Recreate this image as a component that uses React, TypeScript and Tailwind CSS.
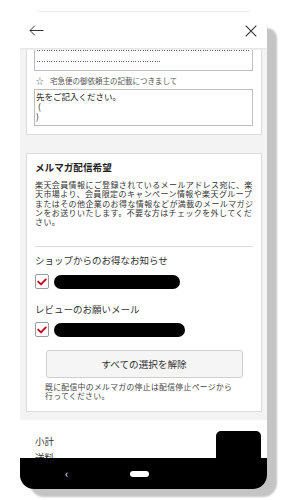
import React from "react";

const jp = "font-['Noto_Sans_CJK_JP','Noto_Sans',sans-serif]";

function Check() {
  return (
    <div className="flex h-[15px] w-[14px] items-center justify-center rounded-[2px] border border-[#9a9a9a] bg-white">
      <svg width="10" height="8" viewBox="0 0 10 8" fill="none">
        <path d="M1.2 3.6 L4 6.4 L8.8 1.4" stroke="#c40018" strokeWidth="1.9" strokeLinecap="round" strokeLinejoin="round" />
      </svg>
    </div>
  );
}

const intro = [
  "楽天会員情報にご登録されているメールアドレス宛に、楽",
  "天市場より、会員限定のキャンペーン情報や楽天グループ",
  "またはその他企業のお得な情報などが満載のメールマガジ",
  "ンをお送りいたします。不要な方はチェックを外してくだ",
  "さい。",
];

export default function App() {
  return (
    <div className={`relative h-[500px] w-[289px] overflow-hidden bg-white text-[#333] ${jp}`}>
      <div className="ml-[37px] mt-[11px] h-px w-[213px] bg-[#f8e6e9]" />

      <div className="relative ml-[20px] mt-[8px] h-[469px] w-[247px] overflow-hidden rounded-tr-[10px] rounded-b-[14px] bg-[#f3f3f3] shadow-[10px_8px_2px_#c4c4c4]">
        {/* header */}
        <div className="relative z-10 h-[28px] bg-white shadow-[0_1px_2px_rgba(0,0,0,0.07)]">
          <div className="flex h-[21px] items-center justify-between pl-[9px] pr-[10px]">
            <svg width="15" height="11" viewBox="0 0 15 11" fill="none">
              <path d="M14.5 5.5 H1 M5.8 0.7 L1 5.5 L5.8 10.3" stroke="#333" strokeWidth="1" />
            </svg>
            <svg width="12" height="12" viewBox="0 0 12 12" fill="none">
              <path d="M0.7 0.7 L11.3 11.3 M11.3 0.7 L0.7 11.3" stroke="#333" strokeWidth="1.1" />
            </svg>
          </div>
        </div>

        {/* card 1 (scrolled) */}
        <div className="ml-[6px] w-[236px] border-x border-b border-[#dcdcdc] bg-white px-[7px] pb-[8px]">
          <div className="h-[21px] w-[219px] border-x border-b border-[#bdbdbd] pl-[2px]">
            <div className="mt-[2px] h-px w-[212px] bg-[repeating-linear-gradient(90deg,#666_0_1px,transparent_1px_2.4px)]" />
            <div className="mt-[10px] h-px w-[124px] bg-[repeating-linear-gradient(90deg,#666_0_1px,transparent_1px_2.4px)]" />
          </div>
          <div className="flex h-[18px] items-center text-[7.5px] leading-[9px] text-[#555]">
            <span className="ml-[2px] w-[14px]">☆</span>
            <span>宅急便の御依頼主の記載につきまして</span>
          </div>
          <div className="h-[37px] w-[219px] whitespace-pre border border-[#bdbdbd] pl-[1px] pt-[1px] text-[8.5px] leading-[10px] text-[#222]">
            <div>先をご記入ください。</div>
            <div> (</div>
            <div>)</div>
          </div>
        </div>

        {/* card 2 */}
        <div className="ml-[6px] mt-[18px] w-[236px] border border-[#dcdcdc] bg-white px-[8px] pb-[11px] pt-[7px]">
          <div className="text-[9.6px] font-bold leading-[12px] text-[#222]">メルマガ配信希望</div>
          <div className="mt-[7px] whitespace-nowrap text-[8px] leading-[9.3px] tracking-[0.4px] text-[#333]">
            {intro.map((l) => (
              <div key={l}>{l}</div>
            ))}
          </div>
          <div className="mt-[20px] h-px w-[218px] bg-[#dcdcdc]" />

          <div className="mt-[7px] text-[9.5px] leading-[12px]">ショップからのお得なお知らせ</div>
          <div className="mt-[8px] flex items-center gap-[5px]">
            <Check />
            <div className="h-[14px] w-[126px] rounded-full bg-black" />
          </div>

          <div className="mt-[14px] text-[9.5px] leading-[12px]">レビューのお願いメール</div>
          <div className="mt-[7px] flex items-center gap-[5px]">
            <Check />
            <div className="h-[14px] w-[131px] rounded-full bg-black" />
          </div>

          <div className="mx-auto mt-[13px] flex h-[28px] w-[197px] items-center justify-center rounded-[3px] border border-[#cfcfcf] bg-[#f5f5f5] text-[9.6px]">
            すべての選択を解除
          </div>
          <div className="ml-[10px] mt-[3.5px] whitespace-nowrap text-[7.8px] leading-[9.2px] tracking-[0.35px] text-[#444]">
            <div>既に配信中のメルマガの停止は配信停止ページから</div>
            <div>行ってください。</div>
          </div>
        </div>

        {/* totals */}
        <div className="mt-[8px] h-[80px] bg-white pl-[15px] pt-[15px] text-[9.5px] leading-[12px]">
          <div>小計</div>
          <div className="mt-[4px]">送料</div>
        </div>

        {/* floating redacted button */}
        <div className="absolute left-[196px] top-[411px] h-[30px] w-[45px] rounded-t-[5px] bg-black" />

        {/* system nav bar */}
        <div className="absolute bottom-0 left-0 flex h-[31px] w-full items-center bg-black">
          <span className="ml-[45px] text-[11px] leading-none text-white">‹</span>
          <div className="ml-[62px] h-[6px] w-[19px] rounded-full bg-white" />
        </div>
      </div>
    </div>
  );
}
